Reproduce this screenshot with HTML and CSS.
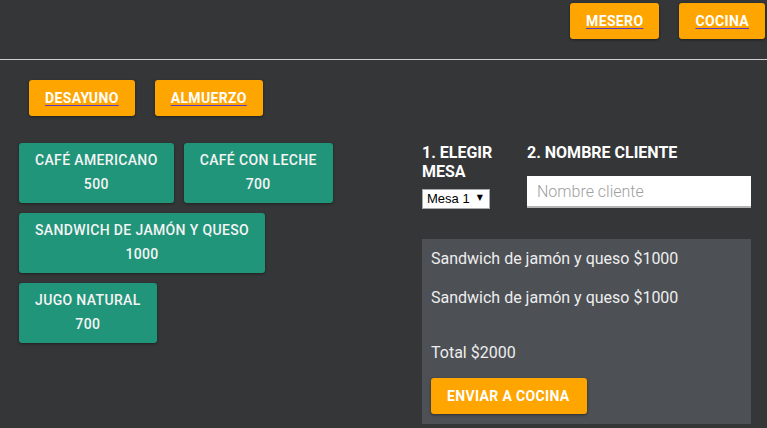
FILE: index.html
```html
<!DOCTYPE html>
<html lang="es">
<head>
<meta charset="utf-8">
<title>Mesero</title>
<link rel="stylesheet" href="styles.css">
</head>
<body>
<header class="topbar">
  <button class="btn"><span class="btn-label">MESERO</span></button>
  <button class="btn"><span class="btn-label">COCINA</span></button>
</header>
<main class="main">
  <nav class="categories">
    <button class="btn"><span class="btn-label">DESAYUNO</span></button>
    <button class="btn"><span class="btn-label">ALMUERZO</span></button>
  </nav>
  <div class="content">
    <section class="menu">
      <button class="card"><span class="card-name">CAFÉ AMERICANO</span><span class="card-price">500</span></button>
      <button class="card"><span class="card-name">CAFÉ CON LECHE</span><span class="card-price">700</span></button>
      <button class="card"><span class="card-name">SANDWICH DE JAMÓN Y QUESO</span><span class="card-price">1000</span></button>
      <button class="card"><span class="card-name">JUGO NATURAL</span><span class="card-price">700</span></button>
    </section>
    <section class="order">
      <div class="order-head">
        <div class="field field-mesa">
          <h3 class="field-title">1. ELEGIR MESA</h3>
          <div class="select-wrap">
            <select class="mesa"><option>Mesa 1</option></select>
            <span class="select-arrow">▼</span>
          </div>
        </div>
        <div class="field field-cliente">
          <h3 class="field-title">2. NOMBRE CLIENTE</h3>
          <input class="cliente" type="text" placeholder="Nombre cliente">
        </div>
      </div>
      <div class="panel">
        <ul class="items">
          <li class="item">Sandwich de jamón y queso $1000</li>
          <li class="item">Sandwich de jamón y queso $1000</li>
        </ul>
        <p class="total">Total $2000</p>
        <button class="btn btn-send">ENVIAR A COCINA</button>
      </div>
    </section>
  </div>
</main>
</body>
</html>
```
FILE: styles.css
```css
* { box-sizing: border-box; }
html, body {
  margin: 0;
  padding: 0;
  background: #353638;
  font-family: Roboto, "Liberation Sans", sans-serif;
  color: #fff;
  height: 100%;
  overflow: hidden;
}
.topbar {
  display: flex;
  justify-content: flex-end;
  align-items: flex-start;
  gap: 20px;
  padding: 3px 2px 0 0;
  height: 60px;
  border-bottom: 1px solid #cfcfcf;
}
.btn {
  height: 36px;
  padding: 0 16px;
  border: none;
  border-radius: 3px;
  background: #ffa500;
  color: #fff;
  font-family: Roboto, "Liberation Sans", sans-serif;
  font-weight: 700;
  font-size: 14px;
  letter-spacing: 0.35px;
  box-shadow: 0 1px 3px rgba(0, 0, 0, 0.45);
  cursor: pointer;
}
.btn-label {
  text-decoration: underline;
  text-decoration-color: #5a3acb;
  text-underline-offset: 2px;
}
.categories {
  display: flex;
  gap: 20px;
  padding: 20px 0 0 29px;
}
.content {
  display: flex;
  margin-top: 27px;
}
.menu {
  width: 403px;
  padding-left: 19px;
  padding-right: 10px;
  display: flex;
  flex-wrap: wrap;
  align-content: flex-start;
  gap: 10px;
}
.card {
  display: flex;
  flex-direction: column;
  align-items: center;
  height: 60px;
  padding: 5px 16px 7px;
  border: none;
  border-radius: 3px;
  background: #21957a;
  color: #f4f4f4;
  font-family: Roboto, "Liberation Sans", sans-serif;
  font-weight: 500;
  font-size: 14px;
  letter-spacing: 0.35px;
  line-height: 24px;
  box-shadow: 0 1px 3px rgba(0, 0, 0, 0.4);
  cursor: pointer;
}
.order {
  margin-left: 19px;
  width: 329px;
}
.order-head {
  display: flex;
}
.field-mesa { width: 105px; }
.field-cliente { width: 224px; }
.field-title {
  margin: 0;
  font-size: 16px;
  font-weight: 700;
  line-height: 19px;
  color: #fff;
}
.field-mesa .field-title { width: 80px; }
.select-wrap {
  position: relative;
  width: 68px;
  height: 20px;
  margin-top: 7px;
}
.mesa {
  appearance: none;
  -webkit-appearance: none;
  width: 100%;
  height: 100%;
  margin: 0;
  padding: 0 0 0 4px;
  border: 1px solid #a9a9a9;
  border-radius: 0;
  background: #fff;
  color: #000;
  font-family: "Liberation Sans", Arial, sans-serif;
  font-size: 13px;
}
.select-arrow {
  position: absolute;
  right: 7px;
  top: 5px;
  font-family: "DejaVu Sans", sans-serif;
  font-size: 8px;
  line-height: 10px;
  color: #000;
  pointer-events: none;
}
.cliente {
  display: block;
  width: 224px;
  height: 32px;
  margin-top: 14px;
  padding: 0 10px;
  border: none;
  border-bottom: 2px solid #b4b4b4;
  background: #fff;
  font-family: Roboto, "Liberation Sans", sans-serif;
  font-size: 16px;
  font-weight: 300;
  color: #333;
  outline: none;
}
.cliente::placeholder { color: #a0a0a0; }
.panel {
  margin-top: 31px;
  background: #4d5055;
  padding: 8px 9px 10px;
}
.items {
  list-style: none;
  margin: 0;
  padding: 0;
  display: flex;
  flex-direction: column;
  gap: 15px;
}
.item, .total {
  font-size: 16px;
  line-height: 24px;
  color: #eeeeee;
}
.total {
  margin: 31px 0 0;
}
.btn-send {
  margin-top: 13px;
  padding: 0 17px 0 16px;
}
```
